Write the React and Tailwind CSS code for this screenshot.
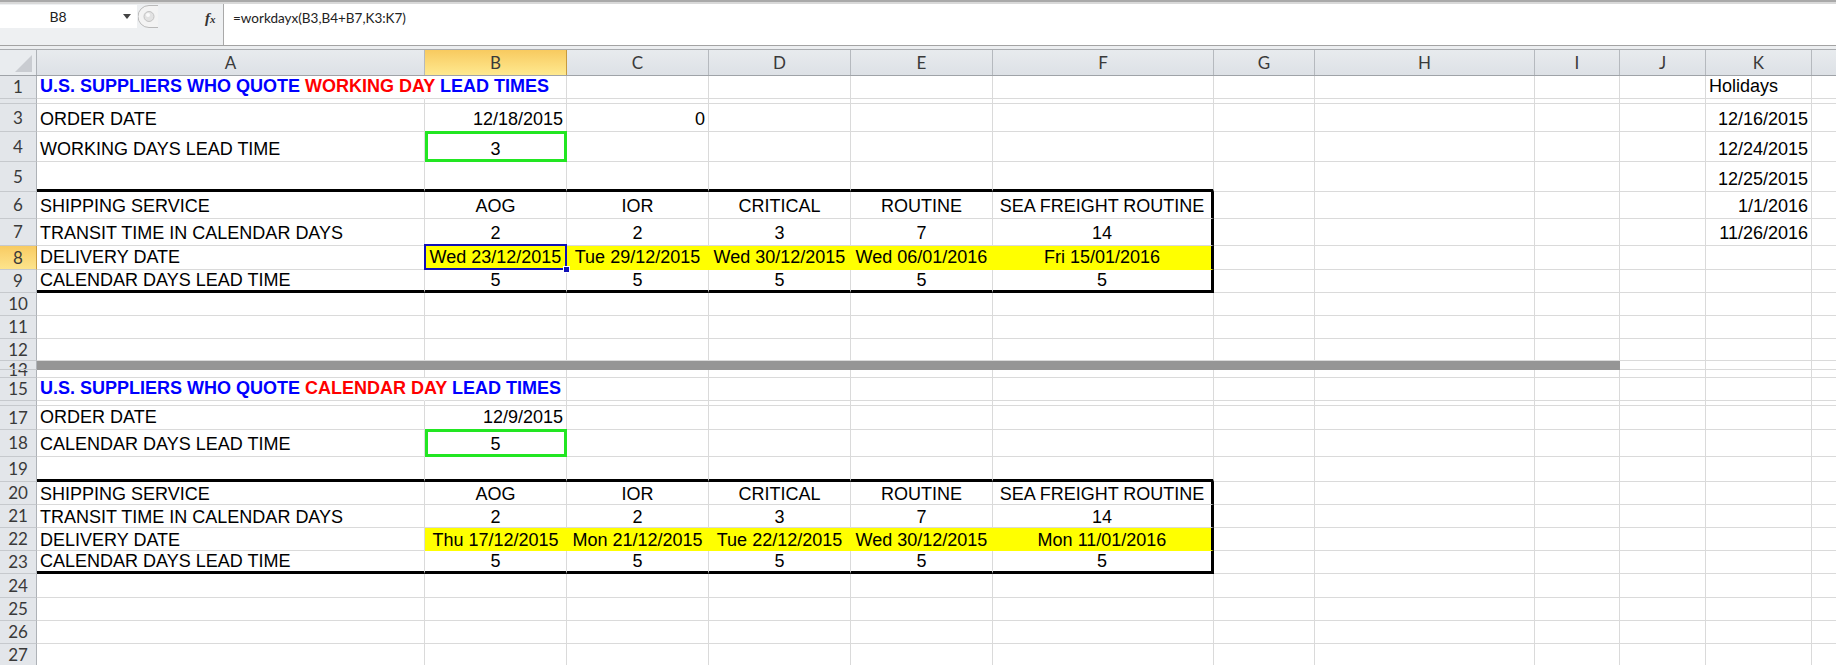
import React from "react";

const cols = [
  { k: "A", w: "w-[388px]" },
  { k: "B", w: "w-[142px]" },
  { k: "C", w: "w-[142px]" },
  { k: "D", w: "w-[142px]" },
  { k: "E", w: "w-[142px]" },
  { k: "F", w: "w-[221px]" },
  { k: "G", w: "w-[101px]" },
  { k: "H", w: "w-[220px]" },
  { k: "I", w: "w-[85px]" },
  { k: "J", w: "w-[86px]" },
  { k: "K", w: "w-[106px]" },
  { k: "", w: "w-[80px]" },
];

const defB = "border-b border-b-[#dadada]";
const defR = "border-r border-r-[#dadada]";
const TB = "border-b-[3px] border-b-black";
const TR = "border-r-[3px] border-r-black";
const YB = "border-b border-b-[#ffff00]";
const YR = "border-r border-r-[#ffff00]";
const YEL = "bg-[#ffff00]";
const BAR = { bg: "bg-[#959595]", b: "border-b border-b-[#959595]", r: "border-r border-r-[#959595]" };

const title = (red) => (
  <span className="font-bold text-[#0000ff]">
    U.S. SUPPLIERS WHO QUOTE <span className="text-[#ff0000]">{red}</span> LEAD TIMES
  </span>
);

const thickTop = { A: { b: TB }, B: { b: TB }, C: { b: TB }, D: { b: TB }, E: { b: TB }, F: { b: TB } };

function tableRows(start, dates, selected, pb) {
  const services = ["AOG", "IOR", "CRITICAL", "ROUTINE", "SEA FREIGHT ROUTINE"];
  const transit = ["2", "2", "3", "7", "14"];
  const letters = ["B", "C", "D", "E", "F"];
  const row = (label, vals, extra) => {
    const cells = { A: { t: label, pb, ...(extra.A || {}) } };
    letters.forEach((l, i) => {
      cells[l] = { t: vals[i], a: "c", pb, ...(extra.cell ? extra.cell(l, i) : {}) };
      if (l === "F") cells[l].r = TR;
    });
    return cells;
  };
  return [
    { n: String(start), h: "h-[23px]", cells: row("SHIPPING SERVICE", services, {}) },
    { n: String(start + 1), h: "h-[23px]", cells: row("TRANSIT TIME IN CALENDAR DAYS", transit, {}) },
    {
      n: String(start + 2),
      h: "h-[23px]",
      hl: selected,
      cells: row("DELIVERY DATE", dates, {
        cell: (l) => ({
          bg: YEL,
          b: YB,
          r: YR,
          o: selected && l === "B" ? "sel" : undefined,
        }),
      }),
    },
    {
      n: String(start + 3),
      h: "h-[23px]",
      cells: row("CALENDAR DAYS LEAD TIME", ["5", "5", "5", "5", "5"], {
        A: { b: TB },
        cell: () => ({ b: TB }),
      }),
    },
  ];
}

const top = tableRows(6, ["Wed 23/12/2015", "Tue 29/12/2015", "Wed 30/12/2015", "Wed 06/01/2016", "Fri 15/01/2016"], true);
top[0].h = "h-[27px]";
top[1].h = "h-[27px]";
top[2].h = "h-[24px]";
top[0].cells.K = { t: "1/1/2016", a: "r" };
top[1].cells.K = { t: "11/26/2016", a: "r" };

const bottom = tableRows(20, ["Thu 17/12/2015", "Mon 21/12/2015", "Tue 22/12/2015", "Wed 30/12/2015", "Mon 11/01/2016"], false, "pb-0");

const ROWS = [
  { n: "1", h: "h-[23px]", cells: { A: { t: title("WORKING DAY"), r: "border-r border-r-transparent" }, K: { t: "Holidays" } } },
  { n: "", h: "h-[5px]", cells: {} },
  { n: "3", h: "h-[28px]", cells: { A: { t: "ORDER DATE" }, B: { t: "12/18/2015", a: "r" }, C: { t: "0", a: "r" }, K: { t: "12/16/2015", a: "r" } } },
  { n: "4", h: "h-[30px]", cells: { A: { t: "WORKING DAYS LEAD TIME" }, B: { t: "3", a: "c", o: "green" }, K: { t: "12/24/2015", a: "r" } } },
  { n: "5", h: "h-[30px]", cells: { ...thickTop, K: { t: "12/25/2015", a: "r" } } },
  ...top,
  { n: "10", h: "h-[23px]", cells: {} },
  { n: "11", h: "h-[23px]", cells: {} },
  { n: "12", h: "h-[22px]", cells: {} },
  {
    n: "13",
    split: "top",
    h: "h-[9px]",
    cells: { A: BAR, B: BAR, C: BAR, D: BAR, E: BAR, F: BAR, G: BAR, H: BAR, I: BAR },
  },
  { n: "14", split: "bottom", h: "h-[8px]", cells: {} },
  { n: "15", h: "h-[23px]", cells: { A: { t: title("CALENDAR DAY"), r: "border-r border-r-transparent" } } },
  { n: "", h: "h-[5px]", cells: {} },
  { n: "17", h: "h-[24px]", cells: { A: { t: "ORDER DATE" }, B: { t: "12/9/2015", a: "r" } } },
  { n: "18", h: "h-[27px]", cells: { A: { t: "CALENDAR DAYS LEAD TIME" }, B: { t: "5", a: "c", o: "green" } } },
  { n: "19", h: "h-[25px]", cells: { ...thickTop } },
  ...bottom,
  { n: "24", h: "h-[24px]", cells: {} },
  { n: "25", h: "h-[23px]", cells: {} },
  { n: "26", h: "h-[23px]", cells: {} },
  { n: "27", h: "h-[23px]", cells: {} },
];

function Cell({ col, c = {} }) {
  const align =
    c.a === "r" ? "justify-end pr-[3px]" : c.a === "c" ? "justify-center" : "justify-start pl-[3px]";
  const pb = c.pb || (c.b === TB ? "pb-0" : "pb-[2px]");
  return (
    <div
      className={`${col.w} shrink-0 h-full relative flex items-end leading-[20px] whitespace-nowrap ${pb} ${c.b || defB} ${c.r || defR} ${c.bg || ""} ${align}`}
    >
      {c.t}
      {c.o === "sel" && (
        <>
          <div className="absolute -top-[2px] -left-px -right-px -bottom-px border-2 border-[#1010b8] z-10" />
          <div className="absolute -right-[4px] -bottom-[4px] w-[7px] h-[7px] bg-[#1010b8] border border-white z-20" />
        </>
      )}
      {c.o === "green" && <div className="absolute -top-px left-0 -right-px -bottom-px border-[3px] border-[#22e622]" />}
    </div>
  );
}

function RowHead({ r }) {
  const bg = r.hl ? "bg-linear-to-b from-[#f8cb62] to-[#fde48c] border-r-[#c79a3e]" : "bg-[#e3e6ea] border-r-[#aeb2b7]";
  return (
    <div
      className={`w-[37px] shrink-0 h-full flex items-center justify-center overflow-hidden border-r border-b border-b-[#c6c9cd] ${bg} font-['Lato',sans-serif] text-[17px] text-[#3a3a3a]`}
    >
      {r.split === "top" ? (
        <span className="leading-[8px] translate-y-[5px]">{r.n}</span>
      ) : r.split === "bottom" ? (
        <span className="leading-[7px] -translate-y-[4px]">{r.n}</span>
      ) : (
        r.n
      )}
    </div>
  );
}

function FormulaBar() {
  return (
    <>
      <div className="h-[4px] bg-[#d9d9d9] border-t-2 border-t-[#a9a9a9]" />
      <div className="flex h-[42px] border-b border-b-[#a3a3a3] font-['Lato',sans-serif] text-[14px] text-[#222]">
        <div className="w-[223px] shrink-0 bg-[#eef0f2] flex items-start">
          <div className="w-[137px] h-[23px] mt-px bg-white flex items-center relative">
            <span className="w-[116px] text-center">B8</span>
            <svg className="absolute right-[6px] top-[9px]" width="8" height="5" viewBox="0 0 8 5">
              <path d="M0 0h8L4 5z" fill="#444" />
            </svg>
          </div>
          <svg className="ml-[1px] mt-px" width="22" height="23" viewBox="0 0 22 23">
            <path d="M20 0.5H11A10.5 10.5 0 0 0 11 22.5H20" fill="#f3f3f3" stroke="#b9b9b9" />
            <circle cx="11" cy="11.5" r="5" fill="#e2e2e2" stroke="#c3c3c3" />
            <circle cx="10" cy="10" r="2" fill="#fafafa" />
          </svg>
          <span className="ml-[45px] mt-[3px] font-['Liberation_Serif',serif] italic font-bold text-[15px] text-[#333]">
            f<span className="text-[11px]">x</span>
          </span>
        </div>
        <div className="flex-1 bg-white border-l border-l-[#a9a9a9] pl-[9px] pt-[4px] text-[13.5px]">=workdayx(B3,B4+B7,K3:K7)</div>
      </div>
      <div className="h-[3px] bg-[#eceef0]" />
    </>
  );
}

function ColHeaders() {
  return (
    <div className="flex h-[27px] border-t border-t-[#a9acb0] border-b border-b-[#9fa3a8] font-['Lato',sans-serif] text-[17px] text-[#3a3a3a]">
      <div className="w-[37px] shrink-0 h-full bg-[#e9ecef] border-r border-r-[#aeb2b7] relative">
        <svg className="absolute right-[4px] bottom-[3px]" width="17" height="17" viewBox="0 0 17 17">
          <path d="M17 0V17H0z" fill="#c9ccd1" />
        </svg>
      </div>
      {cols.map((col, i) => (
        <div
          key={i}
          className={`${col.w} shrink-0 h-full flex items-center justify-center border-r ${
            col.k === "B"
              ? "bg-linear-to-b from-[#f8ca5f] to-[#fee98f] border-r-[#c79a3e]"
              : "bg-linear-to-b from-[#e8ebee] to-[#dde1e6] border-r-[#b5b9be]"
          }`}
        >
          {col.k}
        </div>
      ))}
    </div>
  );
}

export default function App() {
  return (
    <div className="w-[1836px] h-[665px] overflow-hidden bg-white font-['Liberation_Sans',Arial,sans-serif] text-[18px] text-black">
      <FormulaBar />
      <ColHeaders />
      {ROWS.map((r, i) => (
        <div key={i} className={`flex ${r.h}`}>
          <RowHead r={r} />
          {cols.map((col, j) => (
            <Cell key={j} col={col} c={r.cells[col.k]} />
          ))}
        </div>
      ))}
    </div>
  );
}
